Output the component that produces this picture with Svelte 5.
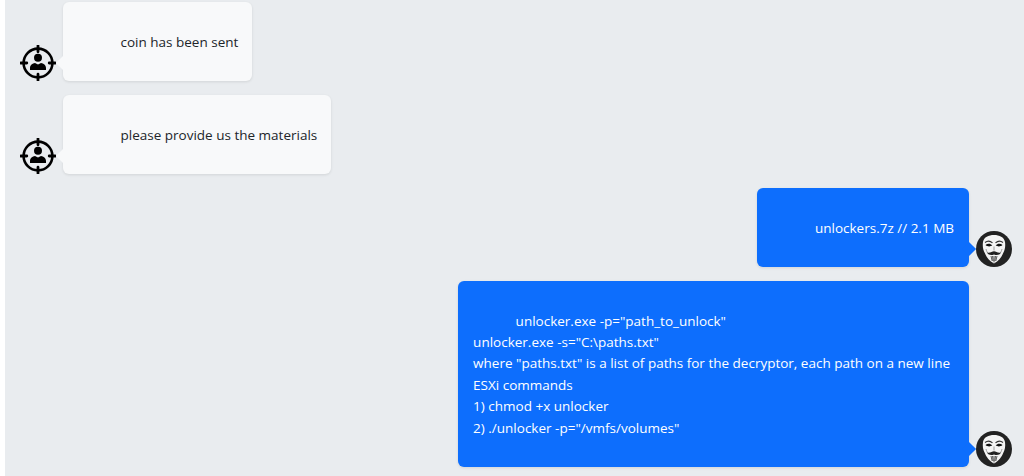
<script lang="ts">
	type Msg = { side: 'them' | 'me'; lines: string[]; wide?: boolean };

	const messages: Msg[] = [
		{ side: 'them', lines: ['coin has been sent'] },
		{ side: 'them', lines: ['please provide us the materials'] },
		{ side: 'me', lines: ['unlockers.7z // 2.1 MB'] },
		{
			side: 'me',
			wide: true,
			lines: [
				'unlocker.exe -p="path_to_unlock"',
				'unlocker.exe -s="C:\\paths.txt"',
				'where "paths.txt" is a list of paths for the decryptor, each path on a new line',
				'ESXi commands',
				'1) chmod +x unlocker',
				'2) ./unlocker -p="/vmfs/volumes"'
			]
		}
	];
</script>

<div class="chat">
	{#each messages as msg}
		<div class="row {msg.side}">
			{#if msg.side === 'them'}
				<svg class="avatar" viewBox="0 0 36 36" aria-hidden="true">
					<circle cx="18" cy="18" r="14.4" fill="none" stroke="#000" stroke-width="2.6" />
					<path d="M18 0.8v6M18 29.2v6M0.8 18h6M29.200 18h6" stroke="#000" stroke-width="2.8" stroke-linecap="round" />
					<circle cx="18" cy="12.800" r="4" fill="#000" />
					<path d="M10 25v-2c0-3 2.500-4.500 5-5l3 1.500 3-1.500c2.500.5 5 2 5 5v2z" fill="#000" />
				</svg>
			{/if}
			<div class="bubble" class:wide={msg.wide}>
				<i class="tail"></i>
				{#each msg.lines as line, i}
					<div class:first={i === 0}>{line}</div>
				{/each}
			</div>
			{#if msg.side === 'me'}
				<svg class="avatar" viewBox="0 0 36 36" aria-hidden="true">
					<circle cx="18" cy="18" r="18" fill="#222" />
					<path d="M7 11c1-5 5.500-7 11-7s10 2 11 7c.6 4 0 8-1.800 11-1.600 3.800-4.200 8-9.200 10.500-5-2.500-7.600-6.700-9.200-10.500C7 19 6.400 15 7 11z" fill="#f4f4f4" />
					<path d="M9.500 14c2.400-1.800 5-1.500 6.800.6-2.200 1.200-4.800 1.200-6.800-.6zM26.500 14c-2.400-1.800-5-1.500-6.800.6 2.200 1.200 4.800 1.200 6.800-.6z" fill="#111" />
					<path d="M9 11.500c2.500-2 5.400-1.600 7.500.4M27 11.500c-2.500-2-5.400-1.600-7.500.4" stroke="#333" stroke-width="1.100" fill="none" />
					<path d="M18 15.500v4M10 18c.5 2 1 3 1.800 4M26 18c-.5 2-1 3-1.800 4" stroke="#888" stroke-width="0.8" fill="none" />
					<path d="M11 21.500c2.800 1 5-1 7-1.200 2 .2 4.200 2.200 7 1.200-1.500 3-4.800 2.800-7 1.900-2.200.9-5.500 1.100-7-1.900z" fill="#222" />
					<path d="M15 25l1.200 5M18 25v6.500M21 25l-1.200 5M16.500 25l.6 5M19.500 25l-.6 5" stroke="#333" stroke-width="0.8" />
				</svg>
			{/if}
		</div>
	{/each}
</div>

<style>
	:global(body) {
		background: #fff;
	}

	.chat {
		height: 476px;
		overflow: hidden;
		box-sizing: border-box;
		margin-left: 5px;
		padding: 2px 12px 0 15px;
		background: #e9ecef;
		display: flex;
		flex-direction: column;
		gap: 14px;
		font-family: "Open Sans", sans-serif;
		font-size: 13.5px;
		line-height: 21.4px;
	}

	.row {
		display: flex;
		align-items: flex-end;
		gap: 7px;
		flex-shrink: 0;
	}

	.row.me {
		justify-content: flex-end;
	}

	.avatar {
		width: 36px;
		height: 36px;
		flex-shrink: 0;
	}

	.bubble {
		position: relative;
		padding: 29.6px 14px 28px 15px;
		border-radius: 6px;
		box-shadow: 0 1px 3px rgba(0, 0, 0, 0.1);
	}

	.me .bubble {
		padding-right: 15px;
	}

	.me .bubble.wide {
		padding-right: 19px;
	}

	.first {
		text-indent: 42.5px;
	}

	.them .bubble {
		background: #f8f9fa;
		color: #212529;
	}

	.me .bubble {
		background: #0d6efd;
		color: #fff;
	}

	.tail {
		position: absolute;
		bottom: 13px;
		width: 10px;
		height: 10px;
		transform: rotate(45deg);
		background: inherit;
	}

	.them .tail {
		left: -5px;
	}

	.me .tail {
		right: -5px;
	}
</style>
